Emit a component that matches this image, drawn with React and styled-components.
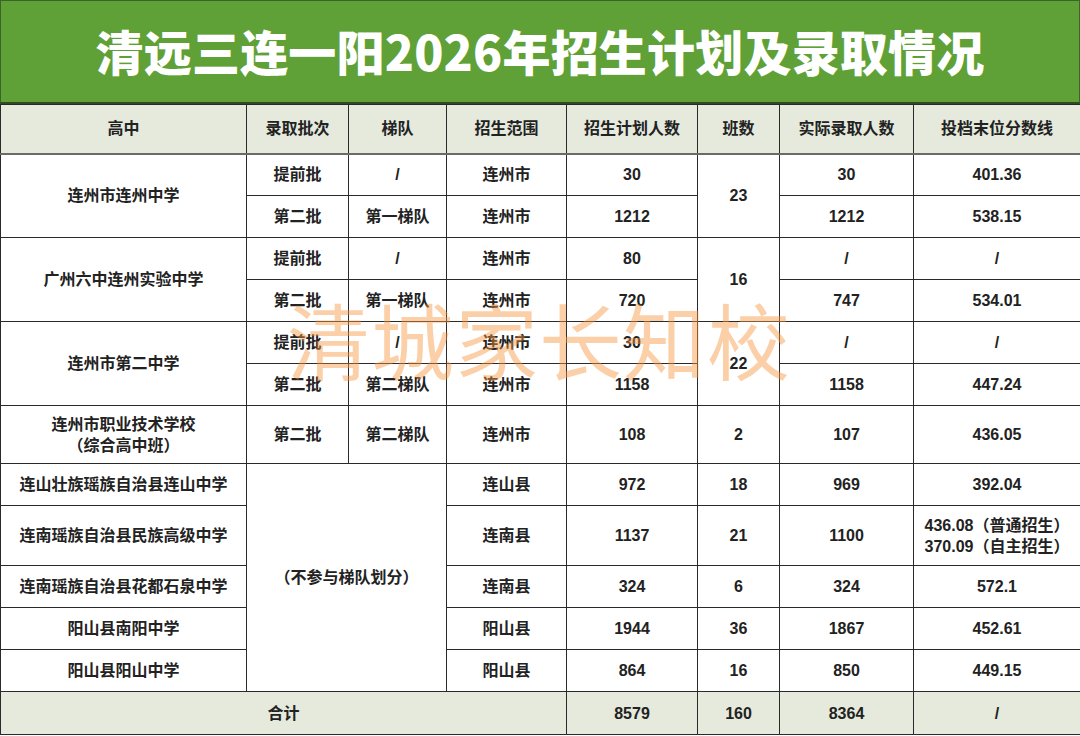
import React from "react";
import styled, { createGlobalStyle } from "styled-components";

const GlobalStyle = createGlobalStyle`
  html, body {
    margin: 0;
    padding: 0;
    background: #ffffff;
  }
  body {
    font-family: "Liberation Sans", "Noto Sans CJK SC", sans-serif;
  }
`;

const Page = styled.div`
  position: relative;
  width: 1080px;
  height: 736px;
  overflow: hidden;
  background: #ffffff;
`;

const Title = styled.h1`
  margin: 0;
  height: 104px;
  box-sizing: border-box;
  display: flex;
  align-items: center;
  justify-content: center;
  background: #5fa136;
  border: 1px solid #3b6428;
  border-bottom: 2px solid #2f4a22;
  color: #ffffff;
  font-family: "Noto Sans CJK SC", sans-serif;
  font-size: 48px;
  font-weight: 900;
  letter-spacing: 0.2px;
  padding-bottom: 4px;
`;

const Table = styled.table`
  width: 1080px;
  table-layout: fixed;
  border-collapse: collapse;
  color: #222222;
  font-size: 16px;
  font-weight: 700;
`;

const Row = styled.tr`
  height: ${p => p.$h || 42}px;
  background: ${p => (p.$shade ? "#e5eadd" : "#ffffff")};
`;

const Cell = styled.td`
  border: 1px solid #2a2a2a;
  text-align: center;
  vertical-align: middle;
  padding: 0 4px;
  line-height: 21px;
  font-family: "Liberation Sans", "Noto Sans CJK SC", sans-serif;
  font-size: 16px;
  font-weight: 700;
  white-space: nowrap;
`;

const HeadCell = styled(Cell).attrs({ as: "th" })`
  border-bottom: 2px solid #6a6a6a;
`;

const Watermark = styled.div`
  position: absolute;
  left: 287px;
  top: 282px;
  font-family: "Noto Sans CJK SC", sans-serif;
  font-size: 83px;
  font-weight: 400;
  line-height: 112px;
  letter-spacing: 1px;
  color: rgba(246, 150, 62, 0.45);
  pointer-events: none;
  white-space: nowrap;
`;

const widths = [246, 102, 98, 120, 131, 82, 134, 167];
const heads = ["高中", "录取批次", "梯队", "招生范围", "招生计划人数", "班数", "实际录取人数", "投档末位分数线"];

const pairs = [
  { school: "连州市连州中学", cls: "23", rows: [["提前批", "/", "连州市", "30", "30", "401.36"], ["第二批", "第一梯队", "连州市", "1212", "1212", "538.15"]] },
  { school: "广州六中连州实验中学", cls: "16", rows: [["提前批", "/", "连州市", "80", "/", "/"], ["第二批", "第一梯队", "连州市", "720", "747", "534.01"]] },
  { school: "连州市第二中学", cls: "22", rows: [["提前批", "/", "连州市", "30", "/", "/"], ["第二批", "第二梯队", "连州市", "1158", "1158", "447.24"]] },
];

const others = [
  { school: "连山壮族瑶族自治县连山中学", area: "连山县", plan: "972", cls: "18", real: "969", score: ["392.04"] },
  { school: "连南瑶族自治县民族高级中学", area: "连南县", plan: "1137", cls: "21", real: "1100", score: ["436.08（普通招生）", "370.09（自主招生）"], h: 60 },
  { school: "连南瑶族自治县花都石泉中学", area: "连南县", plan: "324", cls: "6", real: "324", score: ["572.1"] },
  { school: "阳山县南阳中学", area: "阳山县", plan: "1944", cls: "36", real: "1867", score: ["452.61"] },
  { school: "阳山县阳山中学", area: "阳山县", plan: "864", cls: "16", real: "850", score: ["449.15"] },
];

export default function App() {
  return (
    <Page>
      <GlobalStyle />
      <Title>清远三连一阳2026年招生计划及录取情况</Title>
      <Table>
        <colgroup>
          {widths.map((w, i) => <col key={i} style={{ width: w }} />)}
        </colgroup>
        <thead>
          <Row $h={49} $shade>
            {heads.map(h => <HeadCell key={h}>{h}</HeadCell>)}
          </Row>
        </thead>
        <tbody>
          {pairs.map(p => (
            <React.Fragment key={p.school}>
              <Row>
                <Cell rowSpan={2}>{p.school}</Cell>
                <Cell>{p.rows[0][0]}</Cell>
                <Cell>{p.rows[0][1]}</Cell>
                <Cell>{p.rows[0][2]}</Cell>
                <Cell>{p.rows[0][3]}</Cell>
                <Cell rowSpan={2}>{p.cls}</Cell>
                <Cell>{p.rows[0][4]}</Cell>
                <Cell>{p.rows[0][5]}</Cell>
              </Row>
              <Row>
                <Cell>{p.rows[1][0]}</Cell>
                <Cell>{p.rows[1][1]}</Cell>
                <Cell>{p.rows[1][2]}</Cell>
                <Cell>{p.rows[1][3]}</Cell>
                <Cell>{p.rows[1][4]}</Cell>
                <Cell>{p.rows[1][5]}</Cell>
              </Row>
            </React.Fragment>
          ))}
          <Row $h={58}>
            <Cell>连州市职业技术学校<br />（综合高中班）</Cell>
            <Cell>第二批</Cell>
            <Cell>第二梯队</Cell>
            <Cell>连州市</Cell>
            <Cell>108</Cell>
            <Cell>2</Cell>
            <Cell>107</Cell>
            <Cell>436.05</Cell>
          </Row>
          {others.map((o, i) => (
            <Row key={o.school} $h={o.h}>
              <Cell>{o.school}</Cell>
              {i === 0 && <Cell colSpan={2} rowSpan={5}>（不参与梯队划分）</Cell>}
              <Cell>{o.area}</Cell>
              <Cell>{o.plan}</Cell>
              <Cell>{o.cls}</Cell>
              <Cell>{o.real}</Cell>
              <Cell>
                {o.score.map((s, k) => (
                  <React.Fragment key={k}>{k > 0 && <br />}{s}</React.Fragment>
                ))}
              </Cell>
            </Row>
          ))}
          <Row $h={43} $shade>
            <Cell colSpan={4}>合计</Cell>
            <Cell>8579</Cell>
            <Cell>160</Cell>
            <Cell>8364</Cell>
            <Cell>/</Cell>
          </Row>
        </tbody>
      </Table>
      <Watermark>清城家长知校</Watermark>
    </Page>
  );
}
